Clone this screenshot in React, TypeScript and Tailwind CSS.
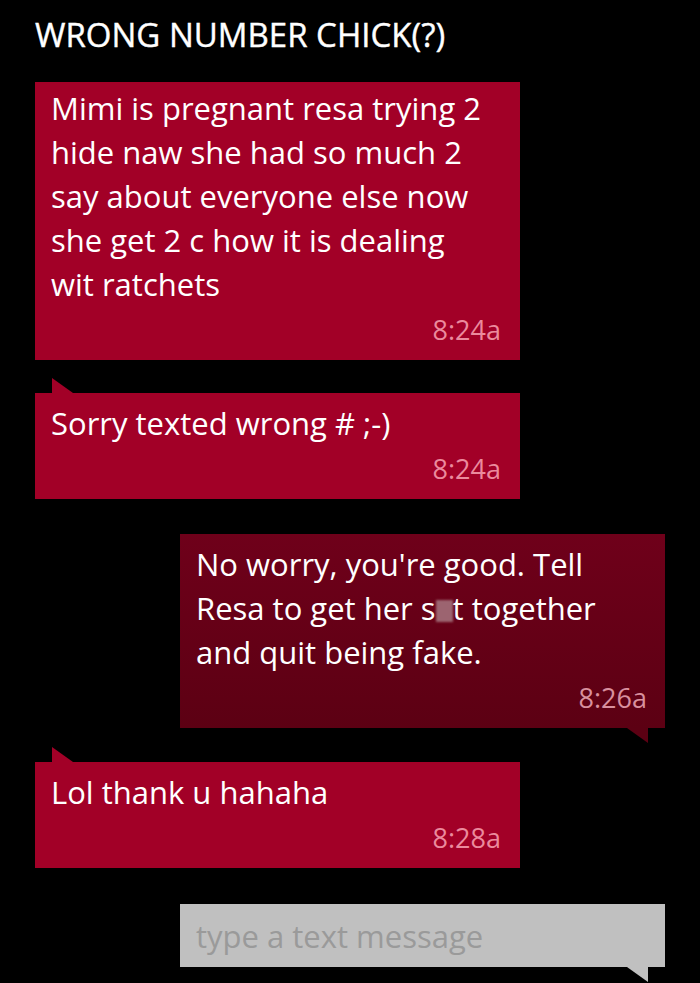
const font = { fontFamily: '"Open Sans", "Noto Sans", sans-serif' };

function Censored() {
  return <span className="inline-block w-[17px] h-[22px] align-[-2px] bg-[#9c6470] blur-[1px]" />;
}

interface BubbleProps {
  children: React.ReactNode;
  time: string;
  first?: boolean;
}

function Incoming(props: BubbleProps) {
  return (
    <div className="flex flex-col w-[485px] ml-[35px]">
      {!props.first && (
        <div className="w-[21px] h-[15px] ml-[17px] bg-[#a20027] [clip-path:polygon(0_0,0_100%,100%_100%)]" />
      )}
      <div className={`bg-[#a20027] px-4 ${props.first ? "pt-[4px]" : "pt-[8px]"} pb-[14px]`}>
        <div className="text-white text-[31px] leading-[44px]">{props.children}</div>
        <div className="mt-2 text-right pr-[3px] text-[#eb8a9d] text-[27px] leading-[32px]">{props.time}</div>
      </div>
    </div>
  );
}

function Outgoing(props: BubbleProps) {
  return (
    <div className="flex flex-col w-[485px] ml-[180px]">
      <div className="bg-gradient-to-b from-[#6f001a] to-[#5c0013] px-4 pt-[8px] pb-[14px]">
        <div className="text-white text-[31px] leading-[44px]">{props.children}</div>
        <div className="mt-2 text-right pr-[2px] text-[#d8909e] text-[27px] leading-[32px]">{props.time}</div>
      </div>
      <div className="w-[21px] h-[15px] ml-[447px] bg-[#5c0013] [clip-path:polygon(0_0,100%_0,100%_100%)]" />
    </div>
  );
}

export default function App() {
  return (
    <div className="w-[700px] h-[983px] bg-black overflow-hidden" style={font}>
      <div className="pl-[35px] pt-[15px] text-white text-[33px] leading-[40px] [-webkit-text-stroke:0.4px_white]">WRONG NUMBER CHICK(?)</div>

      <div className="mt-[27px]">
        <Incoming first time="8:24a">
          Mimi is pregnant resa trying 2<br />
          hide naw she had so much 2<br />
          say about everyone else now<br />
          she get 2 c how it is dealing<br />
          wit ratchets
        </Incoming>
      </div>

      <div className="mt-[18px]">
        <Incoming time="8:24a">Sorry texted wrong # ;-)</Incoming>
      </div>

      <div className="mt-[35px]">
        <Outgoing time="8:26a">
          No worry, you're good. Tell<br />
          Resa to get her s<Censored />t together<br />
          and quit being fake.
        </Outgoing>
      </div>

      <div className="mt-[4px]">
        <Incoming time="8:28a">Lol thank u hahaha</Incoming>
      </div>

      <div className="mt-[36px] flex flex-col w-[485px] ml-[180px]">
        <div className="h-[63px] bg-[#c0c0c0] px-4 flex items-center">
          <span className="text-[#9a9a9a] text-[31px] leading-[44px]">type a text message</span>
        </div>
        <div className="w-[21px] h-[15px] ml-[447px] bg-[#c0c0c0] [clip-path:polygon(0_0,100%_0,100%_100%)]" />
      </div>
    </div>
  );
}
